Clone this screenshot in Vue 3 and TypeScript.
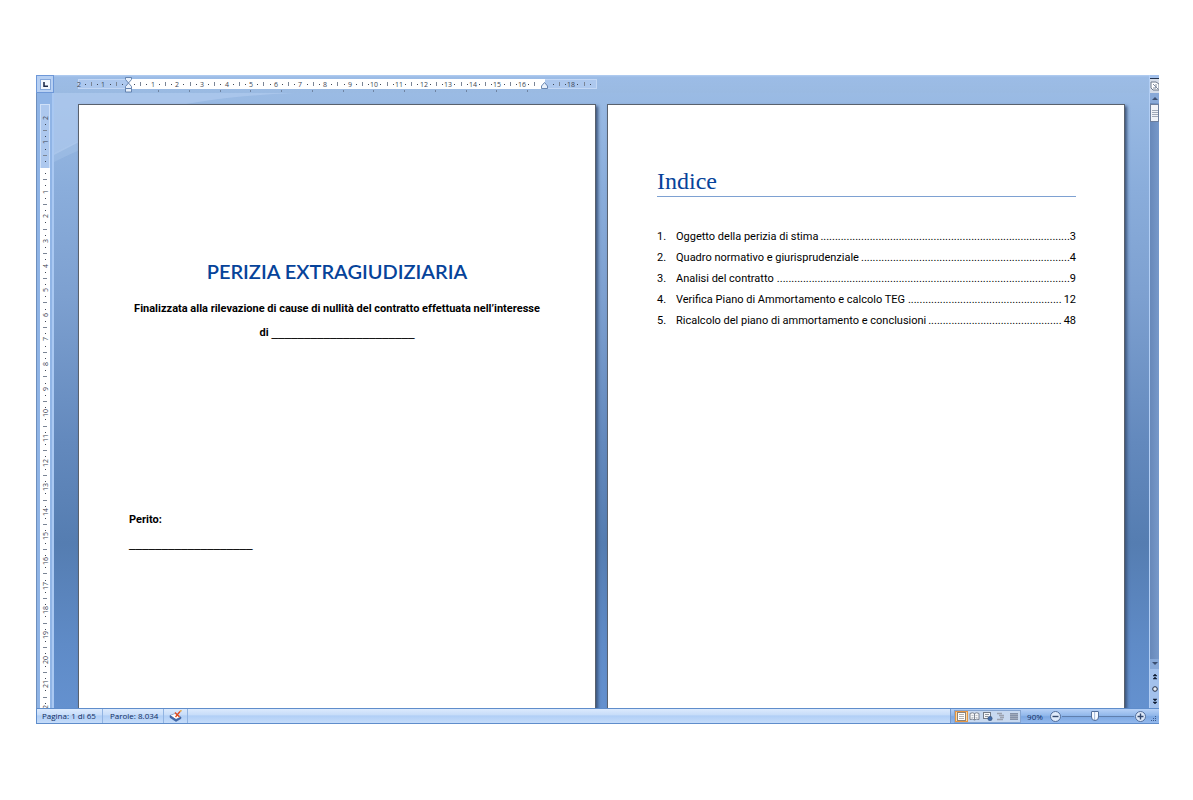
<script setup lang="ts">
import { nextTick, onBeforeUnmount, onMounted, ref } from 'vue'

interface Entry {
  title: string
  page: string
}

const entries: Entry[] = [
  { title: 'Oggetto della perizia di stima', page: '3' },
  { title: 'Quadro normativo e giurisprudenziale', page: '4' },
  { title: 'Analisi del contratto', page: '9' },
  { title: 'Verifica Piano di Ammortamento e calcolo TEG', page: '12' },
  { title: 'Ricalcolo del piano di ammortamento e conclusioni', page: '48' },
]

const zoom = ref(45)
const list = ref<HTMLElement | null>(null)
const dots = ref<number[]>(entries.map(() => 10))

// Fills the room between each title and its page number with whole dots.
async function fitLeaders() {
  if (!list.value) return
  dots.value = entries.map(() => 10)
  await nextTick()
  const leaders = Array.from(list.value.querySelectorAll<HTMLElement>('.leader'))
  dots.value = leaders.map((el) => {
    const run = el.firstElementChild as HTMLElement
    const pitch = run.getBoundingClientRect().width / 10
    return Math.max(0, Math.floor(el.clientWidth / pitch))
  })
}

onMounted(() => {
  fitLeaders()
  window.addEventListener('resize', fitLeaders)
})
onBeforeUnmount(() => window.removeEventListener('resize', fitLeaders))

interface Mark {
  pos: number
  kind: 'number' | 'bar' | 'dot'
  label: string
}

const CM = 24.63

function marks(zero: number, from: number, to: number, hidden: number[]): Mark[] {
  const result: Mark[] = []
  for (let q = from * 4; q <= to * 4; q++) {
    if (hidden.includes(q / 4)) continue
    const pos = Math.round(zero + (q * CM) / 4)
    if (q % 4 === 0) result.push({ pos, kind: 'number', label: String(Math.abs(q / 4)) })
    else if (q % 2 === 0) result.push({ pos, kind: 'bar', label: '' })
    else result.push({ pos, kind: 'dot', label: '' })
  }
  return result
}

const across = marks(54, -2, 18.75, [0, 17, 16.75])
const down = marks(63, -2, 22, [0])
const tabStops = Array.from({ length: 13 }, (_, i) => Math.round(84 + i * 30.75))
</script>

<template>
  <div class="window">
    <div class="body">
      <div class="main">
        <div class="topbar">
          <button class="tab-kind" type="button" aria-label="Tabulazione sinistra">
            <svg width="11" height="11" viewBox="0 0 11 11">
              <rect x="0.5" y="0.5" width="10" height="10" fill="#f3f8ff" stroke="#86a9dc" />
              <path d="M4 3v4.2h4" fill="none" stroke="#1e2c4c" stroke-width="1.6" />
            </svg>
          </button>
          <svg class="ruler-h" width="524" height="18" viewBox="0 0 524 18">
            <rect x="4.5" y="4.5" width="518" height="9" fill="#adc8ee" stroke="#c4d8f5" />
            <rect x="54" y="4" width="417" height="10" fill="#fff" />
            <template v-for="m in across" :key="m.pos">
              <text v-if="m.kind === 'number'" :x="m.pos" y="12" text-anchor="middle">{{ m.label }}</text>
              <rect v-else-if="m.kind === 'bar'" :x="m.pos" y="7" width="1" height="4" fill="#7b8595" />
              <rect v-else :x="m.pos" y="9" width="1" height="1" fill="#3f4756" />
            </template>
            <rect v-for="t in tabStops" :key="t" :x="t" y="15" width="1" height="2" fill="#6f84a3" />
            <g fill="#e8f0fb" stroke="#5b7ba8" stroke-width="0.9">
              <path d="M51.5 2.5h6v2l-3 3.5l-3-3.5z" />
              <path d="M54.5 8l3 3.5v2h-6v-2z" />
              <path d="M51.5 13.5h6v3.5h-6z" />
              <path d="M470.5 7.5l3 3.5v2.5h-6v-2.5z" />
            </g>
          </svg>
        </div>
        <div class="work">
          <div class="ruler-v">
            <svg width="14" height="100%">
              <rect x="2.5" y="0.5" width="9" height="64" fill="#adc8ee" stroke="#cfe0f8" />
              <rect x="2" y="64" width="10" height="100%" fill="#fff" />
              <template v-for="m in down" :key="m.pos">
                <text
                  v-if="m.kind === 'number'"
                  x="0"
                  y="0"
                  text-anchor="middle"
                  :transform="`translate(10 ${m.pos}) rotate(-90)`"
                >{{ m.label }}</text>
                <rect v-else-if="m.kind === 'bar'" x="5" :y="m.pos" width="4" height="1" fill="#7b8595" />
                <rect v-else x="7" :y="m.pos" width="1" height="1" fill="#3f4756" />
              </template>
            </svg>
          </div>
          <main class="canvas">
            <svg class="swirl" width="240" height="80" viewBox="0 0 240 80">
              <path d="M0 0H240Q90 6 25 49L0 62Z" fill="#b4cdf0" opacity="0.6" />
              <path d="M0 69Q14 62 30 55V45L0 60Z" fill="#b4cdf0" opacity="0.3" />
            </svg>
            <article class="page cover">
              <h1>PERIZIA EXTRAGIUDIZIARIA</h1>
              <p class="purpose">
                Finalizzata alla rilevazione di cause di nullità del contratto effettuata nell’interesse
              </p>
              <p class="party">di <span class="blank">______________________</span></p>
              <p class="expert">Perito:</p>
              <p class="signature"><span class="blank">___________________</span></p>
            </article>
            <article class="page contents">
              <h2>Indice</h2>
              <ol ref="list">
                <li v-for="(e, i) in entries" :key="e.title">
                  <span class="num">{{ i + 1 }}.</span>
                  <span>{{ e.title }}</span>
                  <span class="leader" aria-hidden="true"><span>{{ '.'.repeat(dots[i]) }}</span></span>
                  <span :class="{ wide: e.page.length > 1 }">{{ e.page }}</span>
                </li>
              </ol>
            </article>
          </main>
        </div>
      </div>
      <div class="scroll">
        <button class="split" type="button" aria-label="Dividi"></button>
        <button class="toggle" type="button" aria-label="Mostra righello">
          <svg width="10" height="12" viewBox="0 0 10 12">
            <path d="M1 2h5l3 2v6H3L1 8z" fill="#fff" stroke="#6d788a" />
            <path d="M3 4l5 5M3 8h3V4" fill="none" stroke="#7d899d" />
          </svg>
        </button>
        <button class="arrow" type="button" aria-label="Su">
          <svg width="10" height="10" viewBox="0 0 10 10"><path d="M2 7h6L5 4z" fill="#3b4f70" /></svg>
        </button>
        <div class="track">
          <button class="thumb" type="button" aria-label="Barra di scorrimento">
            <svg width="6" height="7" viewBox="0 0 6 7">
              <path d="M0 .5h6M0 2.5h6M0 4.5h6M0 6.5h6" stroke="#a0a9b8" />
            </svg>
          </button>
        </div>
        <button class="arrow" type="button" aria-label="Giù">
          <svg width="10" height="10" viewBox="0 0 10 10"><path d="M2 3h6L5 6z" fill="#3b4f70" /></svg>
        </button>
        <button class="browse" type="button" aria-label="Pagina precedente">
          <svg width="10" height="12" viewBox="0 0 10 12">
            <path d="M3 6h4L5 4zM3 9h4L5 7z" fill="#111c33" stroke="#111c33" stroke-width="0.5" />
          </svg>
        </button>
        <button class="browse" type="button" aria-label="Seleziona oggetto">
          <svg width="10" height="12" viewBox="0 0 10 12">
            <circle cx="5" cy="6" r="2.3" fill="#e6edf7" stroke="#222e45" />
          </svg>
        </button>
        <button class="browse" type="button" aria-label="Pagina successiva">
          <svg width="10" height="12" viewBox="0 0 10 12">
            <path d="M3 3h4L5 5zM3 6h4L5 8z" fill="#111c33" stroke="#111c33" stroke-width="0.5" />
          </svg>
        </button>
      </div>
    </div>
    <footer class="status">
      <button class="cell" type="button">Pagina: 1 di 65</button>
      <button class="cell words" type="button">Parole: 8.034</button>
      <button class="cell proof" type="button" aria-label="Controllo ortografia">
        <svg width="14" height="12" viewBox="0 0 14 12">
          <path d="M1 5.5l5-2 6 3.5-5 2.5z" fill="#fff" stroke="#7d92b5" stroke-width="0.7" />
          <path d="M1 5.5v2l6 4 5-3V7L7 9.5z" fill="#3f68ad" stroke="#345792" stroke-width="0.5" />
          <path d="M6 2.5l4.5 4.5M11 1.5L6.5 7" stroke="#e24a1c" stroke-width="1.3" />
          <path d="M11 1.5l1.5-1.2" stroke="#e9a13a" stroke-width="1.5" />
        </svg>
      </button>
      <div class="spacer"></div>
      <div class="tools">
        <div class="views">
          <button class="view active" type="button" aria-label="Layout di stampa">
            <svg width="11" height="9" viewBox="0 0 11 9">
              <rect x="1.5" y="0.5" width="8" height="8" fill="#fff" stroke="#8f8376" />
              <path d="M3 2.5h5M3 4.5h5M3 6.5h5" stroke="#b3b1ae" />
            </svg>
          </button>
          <button class="view" type="button" aria-label="Lettura a schermo intero">
            <svg width="11" height="9" viewBox="0 0 11 9">
              <path d="M1 1.5Q3.5 0 5.5 1.5Q7.5 0 10 1.5V7.5Q7.5 6.5 5.5 8Q3.5 6.5 1 7.5zM5.5 1.5V8" fill="#f6f7f9" stroke="#7d8592" />
              <path d="M2.5 3.5h2M2.5 5.5h2M6.5 3.5h2M6.5 5.5h2" stroke="#a8adb5" stroke-width="0.7" />
            </svg>
          </button>
          <button class="view" type="button" aria-label="Layout Web">
            <svg width="11" height="9" viewBox="0 0 11 9">
              <rect x="1.5" y="0.5" width="7" height="6" fill="#f6f7f9" stroke="#737b88" />
              <path d="M3 2.5h4M3 4.5h3" stroke="#9298a2" />
              <circle cx="8" cy="6.5" r="2.2" fill="#3f69a9" stroke="#37506f" stroke-width="0.5" />
            </svg>
          </button>
          <button class="view" type="button" aria-label="Struttura">
            <svg width="11" height="9" viewBox="0 0 11 9">
              <path d="M2 1.5h5M4 3.5h5M5 5.5h4M2 7.5h6" stroke="#9ba2af" stroke-width="1.4" />
            </svg>
          </button>
          <button class="view" type="button" aria-label="Bozza">
            <svg width="11" height="9" viewBox="0 0 11 9">
              <rect x="2" y="1" width="8" height="7" fill="#a0aabb" />
              <path d="M2 1.5h8M2 3.5h8M2 5.5h8M2 7.5h8" stroke="#8491a8" />
            </svg>
          </button>
        </div>
        <button class="percent" type="button">90%</button>
        <button class="round" type="button" aria-label="Zoom indietro">
          <svg width="13" height="13" viewBox="0 0 13 13">
            <circle cx="6.5" cy="6.5" r="5" fill="#dfeafa" stroke="#536f9c" />
            <path d="M3.5 6.5h6" stroke="#34496e" stroke-width="1.4" />
          </svg>
        </button>
        <input v-model="zoom" class="slider" type="range" min="0" max="100" aria-label="Zoom" />
        <button class="round" type="button" aria-label="Zoom avanti">
          <svg width="13" height="13" viewBox="0 0 13 13">
            <circle cx="6.5" cy="6.5" r="5" fill="#dfeafa" stroke="#536f9c" />
            <path d="M3.5 6.5h6M6.5 3.5v6" stroke="#34496e" stroke-width="1.4" />
          </svg>
        </button>
        <svg class="grip" width="6" height="6" viewBox="0 0 6 6">
          <path d="M4 1h1v1H4zM2 3h1v1H2zM4 3h1v1H4zM0 5h1v1H0zM2 5h1v1H2zM4 5h1v1H4z" fill="#3c5b8d" />
        </svg>
      </div>
    </footer>
  </div>
</template>

<style>
body {
  margin: 0;
  background: #fff;
}
</style>

<style scoped>
.window {
  box-sizing: border-box;
  display: flex;
  flex-direction: column;
  height: calc(100vh - 151px);
  min-height: 480px;
  margin: 75px 34px 76px 36px;
  font-family: 'Open Sans', 'Noto Sans', sans-serif;
  overflow: hidden;
}

button {
  display: flex;
  align-items: center;
  justify-content: center;
  padding: 0;
  border: 0;
  background: none;
  color: #0e2c62;
  font: inherit;
}

svg {
  display: block;
  flex: none;
}

.body {
  display: flex;
  flex: 1;
  min-height: 0;
  background: linear-gradient(#9dbde5 0, #98b9e3 5%, #8aaddb 18%, #7da0d0 35%, #6389bd 58%, #557db1 74%, #5f8bc7 90%, #6491cf 100%);
}

.main {
  display: flex;
  flex: 1;
  flex-direction: column;
  min-width: 0;
}

.topbar {
  display: flex;
  flex: none;
  gap: 20px;
  height: 18px;
  background: linear-gradient(#b4cff2 0, #9cbce6 2px, #9abae2);
}

.tab-kind {
  width: 18px;
  height: 18px;
  box-sizing: border-box;
  border: 1px solid #6e98d8;
  background: #b7d0f3;
}

.ruler-h text,
.ruler-v text {
  fill: #3d4654;
  font-family: 'Open Sans', sans-serif;
  font-size: 7px;
}

.work {
  display: flex;
  flex: 1;
  min-height: 0;
}

.ruler-v {
  box-sizing: border-box;
  flex: none;
  width: 18px;
  padding: 11px 0 0 1px;
  border-left: 1px solid #6e8fbd;
  border-right: 2px solid #a9c8f2;
  background: #8fb4e6;
  overflow: hidden;
}

.canvas {
  position: relative;
  display: grid;
  flex: 1;
  grid-template-columns: repeat(2, minmax(0, 1fr));
  gap: 11px;
  padding: 11px 24px 0;
  min-width: 0;
  overflow: hidden;
}

.swirl {
  position: absolute;
  top: 0;
  left: 0;
}

.page {
  position: relative;
  box-sizing: border-box;
  border: 1px solid #59616d;
  border-bottom: 0;
  background: #fff;
  box-shadow: 2px 2px 3px #3c547a;
  color: #000;
  font-family: Roboto, 'Open Sans', sans-serif;
  font-size: 11px;
}

.page h1,
.page h2,
.page p {
  margin: 0;
}

.cover {
  padding: 154px 50px 0;
  text-align: center;
  font-weight: 700;
}

.cover h1 {
  color: #06439a;
  font-family: Lato, 'Open Sans', sans-serif;
  font-size: 20px;
  font-weight: 600;
  line-height: 24px;
}

.purpose {
  padding-top: 14px;
  line-height: 24px;
  white-space: nowrap;
}

.party {
  line-height: 22px;
}

.blank {
  font-family: 'DejaVu Sans', sans-serif;
  font-size: 13px;
  font-weight: 400;
}

.expert {
  padding-top: 164px;
  line-height: 24px;
  text-align: left;
}

.signature {
  line-height: 22px;
  text-align: left;
}

.contents {
  padding: 62px 48px 0 49px;
}

.contents h2 {
  border-bottom: 1px solid #7ea1d2;
  color: #06439a;
  font-family: 'Liberation Serif', serif;
  font-size: 24px;
  font-weight: 400;
  line-height: 29px;
}

.contents ol {
  margin: 29px 0 0;
  padding: 0;
  list-style: none;
}

.contents li {
  display: flex;
  line-height: 21px;
  white-space: nowrap;
}

.num {
  flex: none;
  width: 19px;
}

.leader {
  flex: 1;
  min-width: 0;
  margin-left: 1px;
  text-align: right;
}

.wide {
  margin-left: 2px;
}

.scroll {
  display: flex;
  flex: none;
  flex-direction: column;
  box-sizing: border-box;
  width: 10px;
  border-left: 1px solid #b3cff5;
  background: #a3c1ec;
}

.scroll button {
  flex: none;
}

.split {
  height: 3px;
  margin-top: 1px;
  border-bottom: 1px solid #25344e;
}

.toggle {
  height: 14px;
  background: #d5dde9;
}

.arrow {
  height: 10px;
  background: #88a9d8;
}

.track {
  flex: 1;
  min-height: 0;
  background: linear-gradient(90deg, #6788b9, #7799ca);
}

.thumb {
  box-sizing: border-box;
  width: 100%;
  height: 18px;
  margin-top: 1px;
  border: 1px solid #6d7f9d;
  background: #f0f3f8;
}

.browse {
  height: 13px;
}

.status {
  display: flex;
  flex: none;
  height: 16px;
  box-sizing: border-box;
  border: 1px solid #5f8dcb;
  border-right: 0;
  background: linear-gradient(#dceafd 0, #c8ddf9 40%, #b1cff6 50%, #c5dcfa 100%);
  font-size: 8px;
  font-weight: 500;
}

.cell {
  padding: 0 6px 1px 5px;
  border-right: 1px solid #92b4e2;
}

.words {
  padding-right: 5px;
  padding-left: 7px;
}

.proof {
  width: 24px;
  padding: 0;
}

.spacer {
  flex: 1;
}

.tools {
  display: flex;
  align-items: center;
  box-sizing: border-box;
  padding-left: 3px;
  border-left: 1px solid #7799ca;
  background: linear-gradient(#b7d1f6 0, #92b8eb 45%, #7da8e2 55%, #94b9ed 100%);
}

.views {
  display: flex;
  height: 13px;
  border: 1px solid #86a5d1;
  box-sizing: border-box;
  background: #c8d9f0;
}

.view {
  width: 13px;
}

.active {
  box-sizing: border-box;
  border: 1px solid #e59642;
  background: #fed9a0;
}

.percent {
  width: 28px;
}

.round {
  width: 13px;
}

.slider {
  width: 72px;
  height: 13px;
  margin: 0;
  appearance: none;
  background: linear-gradient(#5f7fae, #5f7fae) center / 100% 1px no-repeat;
}

.slider::-webkit-slider-thumb {
  width: 8px;
  height: 10px;
  appearance: none;
  border: 1px solid #536f9c;
  border-radius: 1px 1px 4px 4px;
  background: linear-gradient(90deg, #f7faff 30%, #9bb2d5 45%, #f7faff 60%);
}

.grip {
  align-self: flex-end;
  margin: 0 2px 2px 4px;
}
</style>
